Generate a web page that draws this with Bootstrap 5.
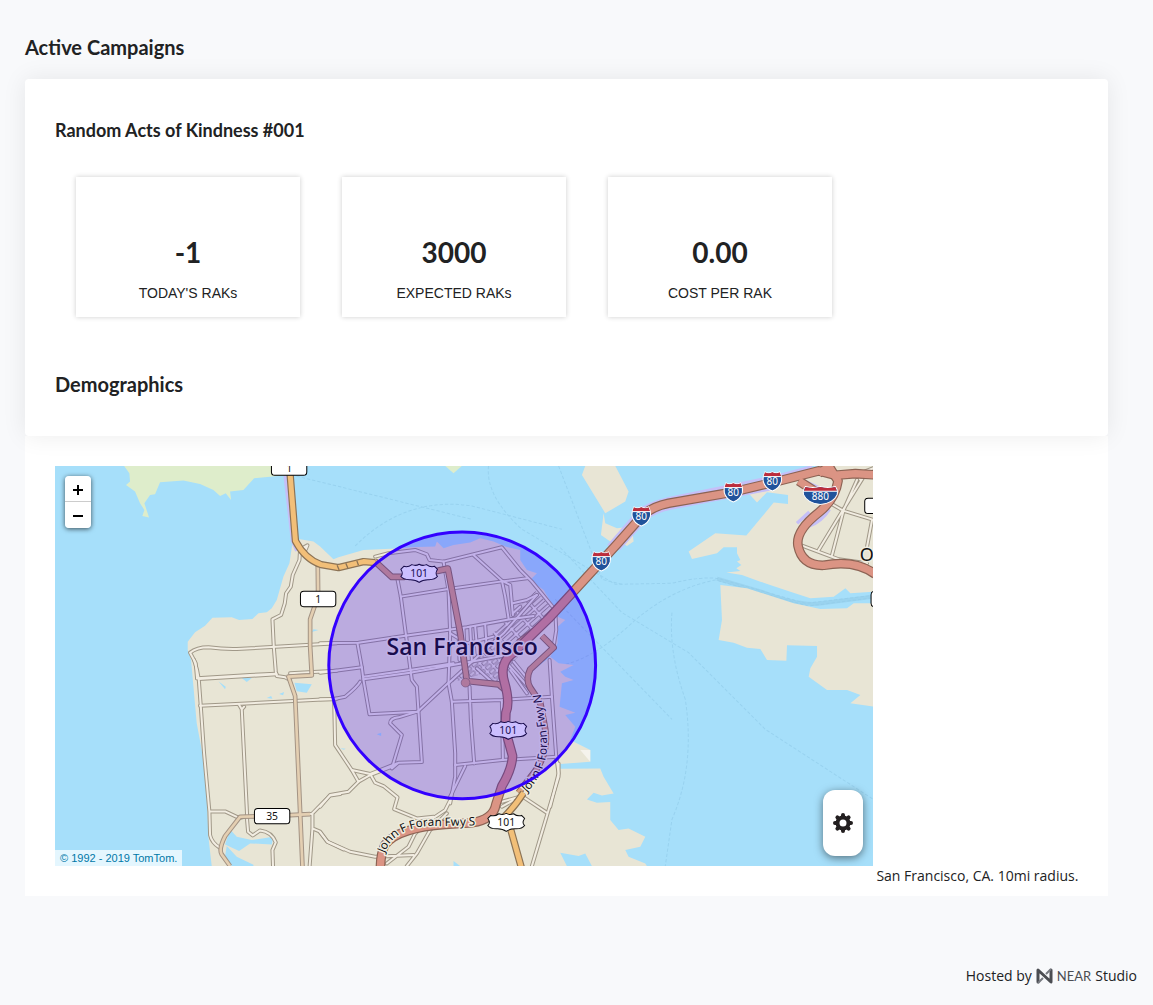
<!DOCTYPE html>
<html lang="en">
<head>
<meta charset="utf-8">
<meta name="viewport" content="width=device-width, initial-scale=1">
<title>Active Campaigns</title>
<link href="https://cdn.jsdelivr.net/npm/bootstrap@5.3.0/dist/css/bootstrap.min.css" rel="stylesheet">
<style>
  body { background: #f8f9fb; color: #212223; font-family: "Open Sans", sans-serif; font-size: 14px; font-weight: 400; line-height: 20px; }
  .page { padding: 35px 45px 0 25px; }
  h1, h2, .stat-value { font-family: Lato, sans-serif; font-weight: 700; margin: 0; }
  h1 { font-size: 20px; line-height: 24px; margin-bottom: 20px; }
  h2 { font-size: 18px; line-height: 42px; }
  h2.demographics { font-size: 20px; line-height: 44px; }
  .campaign { position: relative; z-index: 1; background: #fff; border-radius: 4px; padding: 30px; box-shadow: 0 0 24px rgba(0, 0, 0, .08); }
  .stats { gap: 42px; margin: 26px 21px 45px; }
  .stat { width: 224px; padding: 57px 10px 14px; background: #fff; box-shadow: 0 0 5px rgba(0, 0, 0, .2); }
  .stat-value { font-size: 28px; line-height: 36px; margin-bottom: 13px; }
  .stat-label { font-family: "Liberation Sans", Arial, sans-serif; font-size: 14px; }
  .region { display: grid; grid-template-columns: 80% 1fr; background: #fff; padding: 30px 30px 10px; }
  .region-note { grid-column: 2; grid-row: 2; padding-left: 3px; white-space: nowrap; }
  .map { height: 400px; background: #a6dffa; }
  .map svg.tiles { width: 100%; height: 100%; display: block; }
  .zoomer { position: absolute; left: 10px; top: 10px; width: 26px; border-radius: 4px; box-shadow: 0 1px 5px rgba(0, 0, 0, .65); overflow: hidden; }
  .zoomer button { height: 26px; border: 0; padding: 2px 0 0; background: #fff; color: #000; }
  .zoomer button:first-child { border-bottom: 1px solid #ccc; }
  .credit { position: absolute; left: 0; bottom: 0; padding: 0 5px; background: rgba(255, 255, 255, .7); font: 11px/16px "Liberation Sans", Arial, sans-serif; color: #0078a8; text-decoration: none; }
  .settings { position: absolute; right: 10px; bottom: 10px; width: 40px; height: 66px; border: 0; border-radius: 12px; background: #fff; box-shadow: 0 2px 8px rgba(0, 0, 0, .5); }
  footer { margin-top: 70px; padding-right: 16px; gap: 4px; }
  .brand-word { font-family: Lato, sans-serif; font-size: 13px; font-weight: 400; color: #4b4d52; }
  .maptext { font-family: "Noto Sans", sans-serif; font-weight: 400; fill: #111; text-anchor: middle; }
  .halo { paint-order: stroke; stroke: #efecdf; stroke-width: 9; stroke-linejoin: round; }
  .city { font-family: "Open Sans", sans-serif; font-weight: 600; font-size: 69px; }
</style>
</head>
<body>
<main class="page">
  <h1>Active Campaigns</h1>
  <section class="campaign">
    <h2>Random Acts of Kindness #001</h2>
    <div class="stats d-flex flex-wrap">
      <div class="stat text-center"><div class="stat-value">-1</div><div class="stat-label">TODAY'S RAKs</div></div>
      <div class="stat text-center"><div class="stat-value">3000</div><div class="stat-label">EXPECTED RAKs</div></div>
      <div class="stat text-center"><div class="stat-value">0.00</div><div class="stat-label">COST PER RAK</div></div>
    </div>
    <h2 class="demographics">Demographics</h2>
  </section>

  <section class="region">
    <div class="map position-relative overflow-hidden">
      <svg class="tiles" viewBox="0 0 2454 1200" preserveAspectRatio="xMidYMid slice" role="img" aria-label="Map of San Francisco">
        <defs>
          <pattern id="blocks" width="25" height="17" patternUnits="userSpaceOnUse" patternTransform="rotate(-42)">
            <rect width="25" height="17" fill="#f2ede2"/>
            <rect x="4" y="3" width="18" height="11" rx="3" fill="#e8e5d5" stroke="#a09888" stroke-width="3"/>
          </pattern>
          <pattern id="blocksLong" width="46" height="20" patternUnits="userSpaceOnUse" patternTransform="rotate(-42)">
            <rect width="46" height="20" fill="#f2ede2"/>
            <rect x="4" y="4" width="38" height="12" rx="2" fill="#e8e5d5" stroke="#a09888" stroke-width="3"/>
          </pattern>
          <!-- city streets -->
          <g id="streets" fill="none" stroke-linejoin="round" stroke-linecap="round">
            <g transform="translate(-15 -18)">
              <path d="M768 262L750 268L748 300L728 345L722 380L708 400L704 430L693 465L667 478L671 560L677 635L680 648L705 652L720 660"/>
              <path d="M751 268L772 256L767 268"/>
              <path d="M441 655L437 610L420 578Q440 562 475 562Q520 568 560 567L860 550"/>
              <path d="M441 655L600 645L677 641M720 640L860 632"/>
            </g>
            <g transform="translate(-15 582)">
              <path d="M432 0L441 30L446 57L452 137L462 280L478 455L480 525Q485 548 508 562"/>
              <path d="M446 57L680 43M450 137L730 123L860 116"/>
              <path d="M567 134L575 148L582 140M575 148L591 465V480L594 515L608 526L630 511Q665 515 677 547L667 570L669 625"/>
              <path d="M480 454H525L568 474L591 468"/>
              <path d="M760 462H785L840 406L870 402M787 462V505L778 625M787 505L808 514L832 545L880 568"/>
            </g>
            <g transform="translate(795 162)">
              <path d="M0 370L115 368L255 347L440 322L570 298L640 288"/>
              <path d="M0 458L125 442M120 485Q112 500 75 530L42 537L0 538M42 537L45 675L95 750L115 785L150 765L215 740"/>
              <path d="M112 370L125 442L130 480L148 583L292 575L385 488"/>
              <path d="M130 478L270 458L415 432L560 405M130 470L270 450L400 430"/>
              <path d="M165 110L205 100L285 90L320 103L328 120L370 125L545 82L600 150L635 185L705 270L708 330L700 380"/>
              <path d="M232 178L242 230L258 350L275 480L290 500L305 726L235 728L215 745L245 645L210 610Q210 595 235 592L290 575"/>
              <path d="M242 230L380 208L540 185L620 175"/>
              <path d="M370 125L385 210L390 340L385 490L395 545L405 700V770L390 850"/>
              <path d="M460 105L545 182L570 195L578 285M545 182L555 230L565 295"/>
              <path d="M395 545L545 540L695 530M448 500L452 600L462 730M545 540L548 720"/>
              <path d="M405 735L545 720L710 710M435 738L390 830"/>
              <path d="M385 490L450 430L550 340L650 225"/>
              <path d="M565 435L650 530M580 425L625 480M470 445L520 490M570 450L620 520"/>
              <path d="M688 420L695 530L708 710L715 760L690 860"/>
              <path d="M450 320L455 420M465 320L472 400M495 315L500 390M415 330L418 420M430 325L433 400M390 340L440 370L520 350"/>
              <path d="M578 250L620 240L650 225M578 280L600 260"/>
            </g>
            <g transform="translate(795 582)">
              <path d="M95 330L150 342L165 368L190 378L232 412L222 447L290 475L340 470M115 365L85 395L30 405L0 440M95 330L150 342L230 310"/>
              <path d="M0 515L22 545L90 575L165 590L280 585M390 420L375 450L330 480L285 520L265 560L200 610M380 460L330 510L290 580L260 618"/>
              <path d="M545 425L605 408L680 458M545 440L580 420M715 310L715 350L685 450L635 618"/>
            </g>
            <g transform="translate(1515 -18)">
              <path d="M910 50L845 155L775 270M890 60L850 150L815 285M810 130L848 152L939 180M725 257L835 298L920 310M935 180L920 260M880 48L939 25M900 60L895 50"/>
            </g>
          </g>
          <g id="secondary" fill="none" stroke-linejoin="round">
            <path d="M788 300L789 390L765 460V540L770 628L700 632L720 690L742 1200"/>
            <path d="M765 1044L645 1050L555 1052L510 1110Q490 1150 500 1165L525 1200"/>
          </g>
          <g id="arterial" fill="none" stroke-linejoin="round">
            <path d="M958 285L1010 333L1045 333L1150 314L1178 308L1188 360L1215 500L1235 645L1330 655L1350 672"/>
            <path d="M1460 510L1495 545L1425 610Q1410 640 1425 665L1455 710L1470 790Q1480 860 1440 915L1390 980"/>
            <path d="M1390 530L1475 465"/>
          </g>
          <g id="bridgeway" fill="none" stroke-linejoin="round">
            <path d="M703 0L721 225Q750 280 798 296L850 305L925 287L960 290"/>
            <path d="M1340 1060Q1380 1020 1405 980M1358 1060L1400 1210"/>
          </g>
          <g id="freeway" fill="none" stroke-linejoin="round">
            <path d="M2460 27L2400 23L2340 28L2290 15L2160 48L2025 80L1840 112Q1790 122 1760 150L1685 235L1480 458L1375 560Q1330 590 1348 650Q1365 710 1352 740L1350 790L1372 870Q1370 910 1340 960L1322 1015Q1315 1060 1250 1070L1170 1075Q1030 1085 990 1135Q975 1165 976 1210"/>
            <path d="M2230 45L2300 90M2320 0L2348 45Q2340 100 2290 140Q2220 195 2228 240Q2240 300 2305 298Q2400 280 2460 325M2290 22L2325 0"/>
          </g>
          <symbol id="us" viewBox="-58 -31 116 62" width="116" height="62" x="-58" y="-31" overflow="visible">
            <path d="M-46-20Q-34-16-22-25Q-10-20 0-26Q10-20 22-25Q34-16 46-20L55-11Q46 3 55 10Q48 21 26 20Q10 20 0 28Q-10 20-26 20Q-48 21-55 10Q-46 3-55-11Z" fill="#fff" stroke="#111" stroke-width="3"/>
          </symbol>
          <symbol id="interstate" viewBox="-30 -32 60 64" width="60" height="64" x="-30" y="-32" overflow="visible">
            <path d="M-22-27Q-12-20 0-27Q12-20 22-27Q30 -12 27 2Q22 22 0 30Q-22 22-27 2Q-30-12-22-27Z" fill="#20539b" stroke="#fff" stroke-width="3"/>
            <path d="M-22-26Q-12-20 0-26Q12-20 22-26L26-14H-26Z" fill="#bd2d3c"/><path d="M-27-13H27" stroke="#fff" stroke-width="3"/>
          </symbol>
        </defs>

        <rect width="2454" height="1200" fill="#a6dffa"/>
        <!-- ferry routes -->
        <g fill="none" stroke="#98d2ef" stroke-width="3" stroke-dasharray="10 6">
          <path d="M1300 0Q1290 90 1400 190L1680 355L1850 352Q1940 330 1990 338L2250 412L2454 388"/>
          <path d="M1500 600Q1600 590 1720 480Q1840 370 1980 342L2260 420L2454 395M1850 440Q1840 560 1890 700Q1920 900 1850 1060L1830 1200"/>
          <path d="M1515 245L1700 440L1900 560L2130 790L2454 1000M1500 400L1850 760M1510 0L1640 340L1700 355M900 240Q1050 90 1250 120L1520 190M600 0L1250 160"/>
        </g>
        <path d="M1985 338L2120 378Q2230 422 2300 412L2454 392" fill="none" stroke="#93cbe8" stroke-width="12" stroke-opacity=".6"/>
        <!-- land -->
        <g fill="#e8e5d5">
          <path d="M470 1200L465 1157L460 1112L455 982L440 852L425 772L408 582L398 552V527L420 499L450 479L472 455L530 454L552 462L592 459L610 442L635 439L650 427L665 402L685 332L703 292L711 239L735 220L775 227L795 242L835 280L850 274L925 252L1040 247L1065 244L1140 242L1145 227L1165 247L1195 237L1245 230L1275 217L1315 227L1350 242L1395 252L1395 282L1415 312L1445 322L1425 342L1465 372L1495 422L1507 452L1530 462L1507 482V532L1485 572L1510 592L1555 597L1515 617L1530 632L1555 642L1520 652L1513 722L1560 740L1530 747L1560 782L1545 822L1605 852V887L1515 894V908L1635 907L1645 932L1675 982L1640 988L1615 980L1595 1000L1625 1010L1665 1008V1062L1690 1092L1720 1087L1770 1112L1755 1142L1710 1152L1720 1172L1770 1192L1775 1200Z"/>
          <path d="M1590 0H1680L1720 77L1710 107L1650 142L1580 27ZM1645 142L1650 172L1685 187L1730 182L1735 227L1715 240L1690 222L1665 227L1637 207Z"/>
          <g transform="translate(1515 -18)">
            <path d="M775 18H940V395L870 400L855 385L820 410L750 415L690 395L600 365L545 345L498 338L540 333L528 325L543 315L530 305L540 300L530 280V262L490 262L470 280L395 297L385 275L465 220L558 227L640 128L683 132V105L620 97L590 128L560 95L775 30Z"/>
            <path d="M480 375L560 385L700 430L780 447L860 445L880 430H940V740L870 730L900 705L860 690L800 690L745 650L750 625L770 590V558L680 556L678 602L620 600L600 567L560 563L520 548L475 540L485 480Z"/>
          </g>
        </g>
        <path d="M1575 852L1605 852V887Z" fill="#f5f3ec"/>
        <path transform="translate(-15 -18)" d="M222 18L238 40L240 65L228 75L255 95L270 130L283 150L277 168L297 173L283 130L300 105L315 103L330 67L400 62L450 72L490 90L510 108L527 100L543 120L540 95L580 90L612 55L715 45V18Z" fill="#deedcb"/>
        <path d="M1170 0L1195 22L1220 0Z" fill="#deedcb"/>
        <g fill="#a6dffa">
          <path d="M490 646L512 662L510 670ZM560 636L590 636L575 648ZM718 650L770 655L755 680L725 676ZM675 652L690 640ZM672 684L687 678L684 688ZM635 696L648 690L652 698Z"/>
          <path d="M525 1090L545 1112L590 1122L655 1112L650 1135L585 1132L552 1155L510 1135ZM515 1140L545 1172L595 1196V1200H530L510 1170Z"/>
          <path d="M775 490L790 492L770 498ZM965 805L978 800V810ZM855 847L872 848L866 851ZM1515 1160L1570 1170L1590 1162L1610 1200H1535ZM1195 1185L1215 1200H1195Z"/>
          <path d="M1425 620L1485 572L1470 570L1410 640Z"/>
        </g>

        <!-- downtown blocks -->
        <path d="M1180 650L1310 520L1400 490L1470 430L1500 440L1325 648L1290 620L1230 640Z" fill="url(#blocks)"/>
        <path d="M1310 505L1440 375L1495 430L1370 545Z" fill="url(#blocksLong)"/>

        <use href="#streets" stroke="#a09888" stroke-width="12"/>
        <use href="#streets" stroke="#f2ede2" stroke-width="6"/>
        <use href="#secondary" stroke="#a39384" stroke-width="14"/>
        <use href="#secondary" stroke="#e4cfb2" stroke-width="8"/>
        <g fill="none" stroke="#c5bff8">
          <path d="M1660 240L1750 136Q1780 112 1840 98L2160 32L2270 3M1690 250L1772 158Q1800 136 1850 126L2160 66" stroke-width="10"/>
          <path d="M690 30L712 225L725 255M2225 172L2262 138M2322 130Q2300 165 2262 180M2240 42L2300 70" stroke-width="10"/>
        </g>
        <use href="#arterial" stroke="#8d6f55" stroke-width="20"/>
        <use href="#arterial" stroke="#d8a27e" stroke-width="14"/>
        <use href="#bridgeway" stroke="#8c7355" stroke-width="22"/>
        <use href="#bridgeway" stroke="#f2bf78" stroke-width="15"/>
        <path d="M846 298L852 312M872 292L878 306M905 284L910 298" stroke="#8c7355" stroke-width="4"/>
        <use href="#freeway" stroke="#8c6354" stroke-width="29"/>
        <use href="#freeway" stroke="#db9484" stroke-width="22"/>
        <circle cx="1231" cy="650" r="13" fill="#d8a27e" stroke="#8d6f55" stroke-width="2"/>

        <!-- road labels -->
        <path id="foranS" d="M988 1162Q1020 1075 1150 1080L1270 1078" fill="none"/>
        <path id="foranN" d="M1415 980Q1490 900 1472 790L1456 680" fill="none"/>
        <g class="maptext" font-size="35">
          <text class="halo" style="text-anchor:start"><textPath href="#foranS">John F Foran Fwy S</textPath></text>
          <text class="halo" style="text-anchor:start"><textPath href="#foranN">John F Foran Fwy N</textPath></text>
        </g>
        <use href="#us" x="1092" y="321"/><use href="#us" x="1359" y="792"/><use href="#us" x="1353" y="1068"/>
        <g fill="#fff" stroke="#000" stroke-width="3">
          <rect x="649" y="-18" width="106" height="46" rx="10"/><rect x="736" y="376" width="106" height="46" rx="10"/>
          <rect x="598" y="1027" width="106" height="46" rx="10"/><rect x="2428" y="97" width="106" height="46" rx="10"/><rect x="2447" y="376" width="106" height="46" rx="10"/>
        </g>
        <use href="#interstate" x="1758" y="150"/><use href="#interstate" x="1638" y="285"/><use href="#interstate" x="2034" y="78"/><use href="#interstate" x="2151" y="45"/>
        <g transform="translate(2295 87)">
          <path d="M-45-25Q-22-19 0-25Q22-19 45-25Q54-12 50 0Q40 24 0 29Q-40 24-50 0Q-54-12-45-25Z" fill="#20539b" stroke="#fff" stroke-width="3"/>
          <path d="M-45-24Q-22-18 0-24Q22-18 45-24L49-12H-49Z" fill="#bd2d3c"/><path d="M-50-11H50" stroke="#fff" stroke-width="3"/>
        </g>
        <g class="maptext" font-size="31">
          <text x="1092" y="332">101</text><text x="1359" y="803">101</text><text x="1353" y="1079">101</text>
          <text x="702" y="18">1</text><text x="789" y="410">1</text><text x="651" y="1061">35</text>
        </g>
        <g class="maptext" font-size="30" style="fill:#fff">
          <text x="1758" y="163">80</text><text x="1638" y="298">80</text><text x="2034" y="91">80</text><text x="2151" y="58">80</text><text x="2295" y="101">880</text>
        </g>
        <text class="maptext halo" x="2413" y="284" font-size="54" style="text-anchor:start">Oa</text>
        <text class="maptext halo city" x="1221" y="566">San Francisco</text>

        <!-- campaign radius -->
        <circle cx="1221" cy="598" r="400" fill="#30f" fill-opacity=".25" stroke="#30f" stroke-width="9"/>
      </svg>
      <div class="zoomer d-flex flex-column">
        <button type="button" aria-label="Zoom in"><svg class="d-block mx-auto" width="12" height="12" viewBox="0 0 12 12"><path d="M1 6H11M6 1V11" stroke="#000" stroke-width="2"/></svg></button>
        <button type="button" aria-label="Zoom out"><svg class="d-block mx-auto" width="12" height="12" viewBox="0 0 12 12"><path d="M1 6H11" stroke="#000" stroke-width="2"/></svg></button>
      </div>
      <a class="credit" href="#">© 1992 - 2019 TomTom.</a>
      <button class="settings p-0" type="button" aria-label="Map settings">
        <svg class="d-block mx-auto" width="20" height="20" viewBox="-10 -10 20 20">
          <g stroke="#231f20" stroke-width="4" stroke-linecap="round"><path d="M0-8V-5M0 8V5M-8 0H-5M8 0H5"/><path d="M-5.600-5.600L-4-4M5.600 5.600L4 4M-5.600 5.600L-4 4M5.600-5.600L4-4"/></g>
          <circle r="5.500" fill="#fff" stroke="#231f20" stroke-width="4"/>
        </svg>
      </button>
    </div>
    <div class="region-note">San Francisco, CA. 10mi radius.</div>
  </section>
</main>
<footer class="d-flex justify-content-end align-items-center">
  <span>Hosted by</span>
  <svg width="17" height="18" viewBox="0 0 17 18" aria-hidden="true"><path d="M2 15V3L15 15V3" fill="none" stroke="#4b4d52" stroke-width="3" stroke-linejoin="round" stroke-linecap="round"/><path d="M2 16L7 11M15 2L10 7" stroke="#777a80" stroke-width="2"/></svg>
  <span class="brand-word">NEAR</span>
  <span>Studio</span>
</footer>
<script src="https://cdn.jsdelivr.net/npm/bootstrap@5.3.0/dist/js/bootstrap.bundle.min.js"></script>
</body>
</html>
